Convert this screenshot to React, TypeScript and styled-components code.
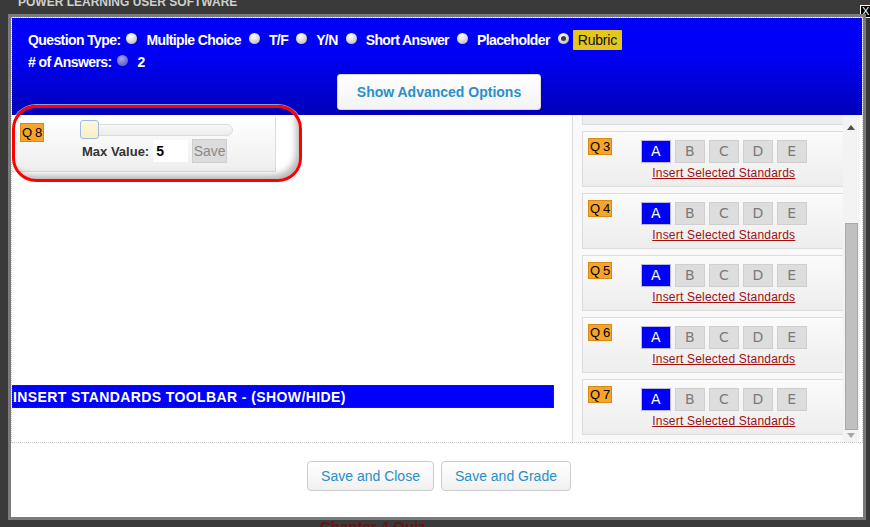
import React from "react";
import styled, { createGlobalStyle, css } from "styled-components";

const GlobalStyle = createGlobalStyle`
  html, body {
    margin: 0;
    padding: 0;
    background: #3a3a3a;
    overflow: hidden;
  }
`;

const Page = styled.div`
  position: relative;
  width: 870px;
  height: 527px;
  overflow: hidden;
  background: #3a3a3a;
  font-family: "Liberation Sans", Arial, sans-serif;
`;

const AppTitle = styled.div`
  height: 14px;
  padding-left: 18px;
  overflow: hidden;
  color: #cfcfcf;
  font-size: 12px;
  font-weight: bold;
  line-height: 12px;
  & span {
    display: block;
    margin-top: -4px;
  }
`;

const BehindText = styled.div`
  position: absolute;
  left: 320px;
  top: 518px;
  color: #6a1212;
  font-size: 15px;
  font-weight: bold;
`;

const CloseBox = styled.div`
  position: absolute;
  right: -4px;
  top: 5px;
  width: 11px;
  height: 11px;
  border: 1px solid #fff;
  background: #000;
  color: #fff;
  font-size: 11px;
  line-height: 11px;
  padding-left: 1px;
`;

const Modal = styled.div`
  position: absolute;
  left: 8px;
  top: 14px;
  width: 852px;
  height: 500px;
  border: 3px solid #7b7b7b;
  background: #fff;
  display: flex;
  flex-direction: column;
`;

const Focused = styled.div`
  border: 1px dotted #c8c8c8;
  display: flex;
  flex-direction: column;
`;

const Header = styled.div`
  height: 97px;
  box-sizing: border-box;
  padding: 12px 0 0 16px;
  background: linear-gradient(#0000ff 0%, #0000f4 40%, #0000b8 100%);
  color: #fff;
  font-family: "Liberation Sans", Arial, sans-serif;
  font-weight: bold;
  font-size: 14px;
  letter-spacing: -0.6px;
  display: flex;
  flex-direction: column;
`;

const OptionRow = styled.div`
  display: flex;
  align-items: center;
  height: 20px;
  & + & {
    margin-top: 3px;
    height: 18px;
  }
`;

const RowLabel = styled.span`
  margin-right: 6px;
`;

const Option = styled.span`
  display: flex;
  align-items: center;
  margin-right: 3px;
`;

const Radio = styled.span<{ $checked?: boolean; $disabled?: boolean }>`
  position: relative;
  flex: none;
  width: 11px;
  height: 11px;
  border-radius: 50%;
  margin-top: -4px;
  background: ${(p) =>
    p.$disabled
      ? "radial-gradient(circle at 40% 35%, #a8a8ee, #6c6cd0 60%, #5050b8)"
      : "radial-gradient(circle at 40% 30%, #ffffff, #d6d6d6 55%, #9e9e9e)"};
  ${(p) =>
    p.$checked &&
    css`
      &::after {
        content: "";
        position: absolute;
        left: 3px;
        top: 3px;
        width: 5px;
        height: 5px;
        border-radius: 50%;
        background: #3c3c3c;
      }
    `}
`;

const OptionText = styled.span<{ $selected?: boolean }>`
  margin-left: 4px;
  padding: 0 5px;
  line-height: 20px;
  ${(p) =>
    p.$selected &&
    css`
      background: #e3c61e;
      color: #111;
      font-weight: normal;
      letter-spacing: -0.2px;
      border-radius: 1px;
    `}
`;

const AdvancedButton = styled.button`
  align-self: center;
  margin: 3px 0 0 -12px;
  width: 204px;
  height: 36px;
  border: 1px solid #d8d8d8;
  border-radius: 3px;
  background: linear-gradient(#ffffff, #f3f3f3);
  color: #2a90c8;
  font-family: "Liberation Sans", Arial, sans-serif;
  font-size: 14px;
  font-weight: bold;
  cursor: pointer;
`;

const Body = styled.div`
  height: 327px;
  display: flex;
`;

const LeftPanel = styled.div`
  flex: 0 0 560px;
  display: flex;
  flex-direction: column;
  background: #fff;
`;

const RubricCard = styled.div`
  margin-top: 2px;
  width: 264px;
  height: 55px;
  box-sizing: border-box;
  border-right: 1px solid #dcdcdc;
  border-bottom: 1px solid #dcdcdc;
  background: linear-gradient(#ffffff, #eeeeee);
  display: grid;
  grid-template-columns: 60px 1fr;
  padding: 3px 0 0 8px;
`;

const Badge = styled.span<{ $h?: number }>`
  display: inline-block;
  box-sizing: border-box;
  height: ${(p) => p.$h ?? 17}px;
  padding: 0 1px;
  background: #f7a42c;
  border: 1px solid #d88a10;
  color: #000;
  font-size: 13px;
  letter-spacing: -0.4px;
  line-height: ${(p) => (p.$h ?? 17) - 2}px;
  white-space: nowrap;
  align-self: start;
  justify-self: start;
`;

const RubricBadge = styled(Badge)`
  margin-top: 3px;
`;

const RubricControls = styled.div`
  display: flex;
  flex-direction: column;
`;

const SliderTrack = styled.div`
  position: relative;
  width: 153px;
  height: 19px;
  display: flex;
  align-items: center;
`;

const Track = styled.div`
  width: 100%;
  height: 12px;
  box-sizing: border-box;
  border: 1px solid #dddddd;
  border-radius: 6px;
  background: linear-gradient(#f7f7f7, #ececec);
`;

const Handle = styled.div`
  position: absolute;
  left: 0;
  top: 0;
  width: 19px;
  height: 19px;
  box-sizing: border-box;
  border: 1px solid #9fbbe0;
  border-radius: 3px;
  background: linear-gradient(#fff8e0, #fbeec4);
`;

const MaxRow = styled.div`
  display: flex;
  align-items: center;
  padding-left: 2px;
`;

const MaxLabel = styled.span`
  font-size: 13px;
  font-weight: bold;
  color: #333;
  margin-right: 4px;
`;

const MaxInput = styled.span`
  width: 35px;
  height: 22px;
  box-sizing: border-box;
  background: #fff;
  padding-left: 3px;
  font-size: 14px;
  font-weight: bold;
  line-height: 22px;
  color: #000;
`;

const SaveSmall = styled.span`
  margin-left: 4px;
  width: 35px;
  height: 24px;
  box-sizing: border-box;
  border: 1px solid #cfcfcf;
  background: #dcdcdc;
  color: #8a8a8a;
  font-size: 14px;
  line-height: 22px;
  text-align: center;
`;

const ToolbarToggle = styled.div`
  margin-top: auto;
  margin-bottom: 34px;
  width: 542px;
  height: 23px;
  box-sizing: border-box;
  border: 1px dotted #333;
  background: #0000ff;
  color: #fff;
  font-size: 14px;
  font-weight: bold;
  letter-spacing: 0.4px;
  line-height: 22px;
  white-space: nowrap;
`;

const RightPanel = styled.div`
  flex: 0 0 286px;
  border-left: 1px solid #dcdcdc;
  background: #f9f9f9;
  display: flex;
  overflow: hidden;
`;

const QuestionList = styled.div`
  flex: 1;
  padding-left: 9px;
  display: flex;
  flex-direction: column;
  gap: 6px;
  margin-top: -46px;
`;

const QuestionCard = styled.div`
  flex: none;
  height: 56px;
  box-sizing: border-box;
  border: 1px solid #dcdcdc;
  border-right: none;
  background: linear-gradient(#fbfbfb, #ededed);
  padding: 6px 0 0 5px;
  display: flex;
  align-items: flex-start;
`;

const Choices = styled.div`
  margin-left: 29px;
  margin-top: 2px;
  display: flex;
  flex-direction: column;
  align-items: center;
`;

const ChoiceRow = styled.div`
  display: flex;
  gap: 4px;
`;

const Choice = styled.span<{ $active?: boolean }>`
  width: 30px;
  height: 23px;
  box-sizing: border-box;
  border: 1px solid ${(p) => (p.$active ? "#b8b8e0" : "#cfcfcf")};
  background: ${(p) => (p.$active ? "#0000ff" : "#dddddd")};
  color: ${(p) => (p.$active ? "#fff" : "#7a7a7a")};
  font-family: "DejaVu Sans", Verdana, sans-serif;
  font-size: 14px;
  line-height: 21px;
  text-align: center;
`;

const StandardsLink = styled.a`
  margin-top: 3px;
  color: #a01010;
  font-size: 12px;
  letter-spacing: 0.2px;
  line-height: 14px;
  text-decoration: underline;
  cursor: pointer;
`;

const ScrollBar = styled.div`
  flex: 0 0 16px;
  background: #f3f3f3;
  display: flex;
  flex-direction: column;
  align-items: center;
`;

const Arrow = styled.span<{ $down?: boolean }>`
  width: 0;
  height: 0;
  border-left: 4px solid transparent;
  border-right: 4px solid transparent;
  ${(p) =>
    p.$down
      ? css`
          border-top: 5px solid #a8a8a8;
          margin-top: 3px;
        `
      : css`
          border-bottom: 5px solid #505050;
          margin-top: 10px;
        `}
`;

const Thumb = styled.div`
  margin-top: 93px;
  width: 13px;
  height: 207px;
  box-sizing: border-box;
  border: 1px solid #a8a8a8;
  background: #c0c0c0;
`;

const Footer = styled.div`
  flex: 1;
  display: flex;
  justify-content: center;
  align-items: flex-start;
  gap: 7px;
  padding: 18px 0 0 4px;
`;

const FooterButton = styled.button<{ $w: number }>`
  width: ${(p) => p.$w}px;
  height: 30px;
  border: 1px solid #cccccc;
  border-radius: 4px;
  background: linear-gradient(#ffffff, #f1f1f1);
  color: #2a8fc6;
  font-family: "Liberation Sans", Arial, sans-serif;
  font-size: 14px;
  cursor: pointer;
`;

const Highlight = styled.div`
  position: absolute;
  left: 12px;
  top: 105px;
  width: 290px;
  height: 77px;
  box-sizing: border-box;
  border: 3px solid #ff0000;
  border-radius: 24px;
  box-shadow: inset -5px -6px 6px -2px rgba(0, 0, 0, 0.28), 0 0 0 1px rgba(255, 255, 255, 0.6);
  pointer-events: none;
`;

const questionTypes = ["Multiple Choice", "T/F", "Y/N", "Short Answer", "Placeholder", "Rubric"];
const letters = ["A", "B", "C", "D", "E"];
const questions = [3, 4, 5, 6, 7];

export default function App() {
  return (
    <Page>
      <GlobalStyle />
      <AppTitle>
        <span>POWER LEARNING USER SOFTWARE</span>
      </AppTitle>
      <BehindText>Chapter 4 Quiz</BehindText>
      <CloseBox>X</CloseBox>

      <Modal>
        <Focused>
          <Header>
            <OptionRow>
              <RowLabel>Question Type:</RowLabel>
              {questionTypes.map((t) => (
                <Option key={t}>
                  <Radio $checked={t === "Rubric"} />
                  <OptionText $selected={t === "Rubric"}>{t}</OptionText>
                </Option>
              ))}
            </OptionRow>
            <OptionRow>
              <RowLabel># of Answers:</RowLabel>
              <Option>
                <Radio $disabled />
                <OptionText>2</OptionText>
              </Option>
            </OptionRow>
            <AdvancedButton>Show Advanced Options</AdvancedButton>
          </Header>

          <Body>
            <LeftPanel>
              <RubricCard>
                <RubricBadge $h={19}>Q 8</RubricBadge>
                <RubricControls>
                  <SliderTrack>
                    <Track />
                    <Handle />
                  </SliderTrack>
                  <MaxRow>
                    <MaxLabel>Max Value:</MaxLabel>
                    <MaxInput>5</MaxInput>
                    <SaveSmall>Save</SaveSmall>
                  </MaxRow>
                </RubricControls>
              </RubricCard>
              <ToolbarToggle>INSERT STANDARDS TOOLBAR - (SHOW/HIDE)</ToolbarToggle>
            </LeftPanel>

            <RightPanel>
              <QuestionList>
                {/* tail of the card scrolled out of view */}
                <QuestionCard />
                {questions.map((q) => (
                  <QuestionCard key={q}>
                    <Badge>Q {q}</Badge>
                    <Choices>
                      <ChoiceRow>
                        {letters.map((l) => (
                          <Choice key={l} $active={l === "A"}>
                            {l}
                          </Choice>
                        ))}
                      </ChoiceRow>
                      <StandardsLink>Insert Selected Standards</StandardsLink>
                    </Choices>
                  </QuestionCard>
                ))}
              </QuestionList>
              <ScrollBar>
                <Arrow />
                <Thumb />
                <Arrow $down />
              </ScrollBar>
            </RightPanel>
          </Body>
        </Focused>

        <Footer>
          <FooterButton $w={127}>Save and Close</FooterButton>
          <FooterButton $w={130}>Save and Grade</FooterButton>
        </Footer>
      </Modal>

      <Highlight />
    </Page>
  );
}
